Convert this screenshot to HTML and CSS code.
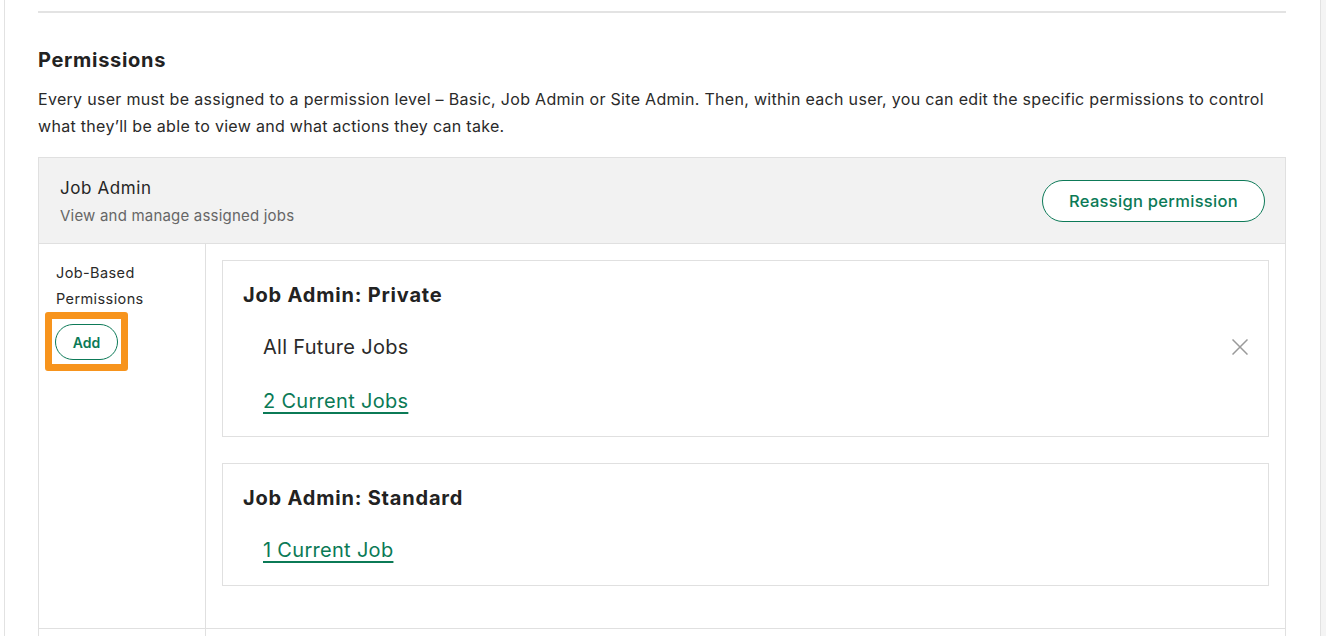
FILE: index.html
```html
<!DOCTYPE html>
<html lang="en">
<head>
<meta charset="utf-8">
<title>Permissions</title>
<link rel="stylesheet" href="styles.css">
</head>
<body>
<div class="page">
  <div class="panel">
    <div class="top-rule"></div>
    <h2 class="title">Permissions</h2>
    <p class="intro">Every user must be assigned to a permission level – Basic, Job Admin or Site Admin. Then, within each user, you can edit the specific permissions to control what they’ll be able to view and what actions they can take.</p>

    <div class="perm-table">
      <div class="perm-head">
        <div class="perm-head-text">
          <div class="perm-name">Job Admin</div>
          <div class="perm-desc">View and manage assigned jobs</div>
        </div>
        <button class="btn btn-lg">Reassign permission</button>
      </div>
      <div class="perm-row">
        <div class="perm-label">
          <div class="label-text">Job-Based<br>Permissions</div>
          <div class="highlight"><button class="btn btn-sm">Add</button></div>
        </div>
        <div class="perm-body">
          <div class="card">
            <div class="card-title">Job Admin: Private</div>
            <div class="card-line">
              <span>All Future Jobs</span>
              <svg class="close" width="16" height="16" viewBox="0 0 16 16"><path d="M0.5 0.5 L15.5 15.5 M15.5 0.5 L0.5 15.5" stroke="#9a9a9a" stroke-width="1.5" fill="none"/></svg>
            </div>
            <div class="card-line"><a class="link" href="#">2 Current Jobs</a></div>
          </div>
          <div class="card">
            <div class="card-title">Job Admin: Standard</div>
            <div class="card-line"><a class="link" href="#">1 Current Job</a></div>
          </div>
        </div>
      </div>
      <div class="perm-row perm-row-next">
        <div class="perm-label"></div>
        <div class="perm-body"></div>
      </div>
    </div>
  </div>
</div>
</body>
</html>
```
FILE: styles.css
```css
* { box-sizing: border-box; }
html, body { margin: 0; padding: 0; }
body {
  background: #f4f4f4;
  font-family: Inter, "Noto Sans", sans-serif;
  color: #222;
  height: 636px;
  overflow: hidden;
}
.page {
  background: #fff;
  width: 1321px;
  height: 636px;
  padding-left: 4px;
}
.panel {
  background: #fff;
  border-left: 1px solid #e2e2e2;
  border-right: 1px solid #e2e2e2;
  height: 100%;
  padding: 11px 34px 0 33px;
}
.top-rule {
  height: 2px;
  background: #e3e3e3;
}
.title {
  margin: 33px 0 0;
  font-size: 20px;
  font-weight: 700;
  line-height: 28px;
  letter-spacing: 0.7px;
}
.intro {
  margin: 12px 0 0;
  font-size: 16px;
  line-height: 27px;
  letter-spacing: 0.3px;
  color: #2a2a2a;
}
.perm-table {
  margin-top: 17px;
  border: 1px solid #e0e0e0;
  border-bottom: 0;
}
.perm-head {
  background: #f2f2f2;
  height: 86px;
  display: flex;
  align-items: center;
  justify-content: space-between;
  padding: 0 20px 0 20px;
  border-bottom: 1px solid #e0e0e0;
}
.perm-head-text { margin-top: 2px; padding-left: 1px; }
.perm-name {
  font-size: 17px;
  line-height: 27px;
  color: #262626;
  letter-spacing: 0.6px;
}
.perm-desc {
  font-size: 15px;
  line-height: 27px;
  color: #666;
  letter-spacing: 0.2px;
}
.btn {
  background: #fff;
  border: 1px solid #0d7a58;
  color: #0b7a56;
  font-family: inherit;
  font-weight: 500;
  border-radius: 999px;
  cursor: pointer;
  padding: 0;
}
.btn-lg {
  height: 42px;
  width: 223px;
  font-size: 16.5px;
  letter-spacing: 0.3px;
}
.btn-sm {
  height: 36px;
  width: 63px;
  font-size: 14px;
  font-weight: 600;
}
.perm-row {
  display: flex;
}
.perm-label {
  width: 167px;
  flex: none;
  border-right: 1px solid #e0e0e0;
  padding: 16px 0 0 17px;
}
.label-text {
  font-size: 14.5px;
  line-height: 26px;
  color: #2a2a2a;
  letter-spacing: 0.4px;
}
.highlight {
  display: inline-block;
  margin: 0 0 0 -11px;
  border: 7px solid #f7941d;
  border-radius: 3px;
  padding: 5px 3px 4px 3px;
  background: #fff;
}
.highlight .btn-sm { display: block; }
.perm-body {
  flex: 1;
  padding: 16px 16px 42px 16px;
  display: flex;
  flex-direction: column;
  gap: 26px;
}
.card {
  border: 1px solid #e0e0e0;
  padding: 19px 20px 20px 20px;
}
.card-title {
  font-size: 20px;
  font-weight: 700;
  line-height: 30px;
  letter-spacing: 0.8px;
}
.card-line {
  margin-top: 22px;
  padding-left: 20px;
  font-size: 20px;
  line-height: 30px;
  display: flex;
  align-items: center;
  justify-content: space-between;
  color: #2a2a2a;
  letter-spacing: 0.3px;
}
.card-line + .card-line { margin-top: 24px; }
.link {
  color: #0b7a56;
  text-decoration: underline;
  text-underline-offset: 4px;
  text-decoration-thickness: 1.5px;
}
.perm-row-next {
  height: 8px;
  border-top: 1px solid #e0e0e0;
}
.perm-row-next .perm-label { padding: 0; }
.perm-row-next .perm-body { padding: 0; }
```
